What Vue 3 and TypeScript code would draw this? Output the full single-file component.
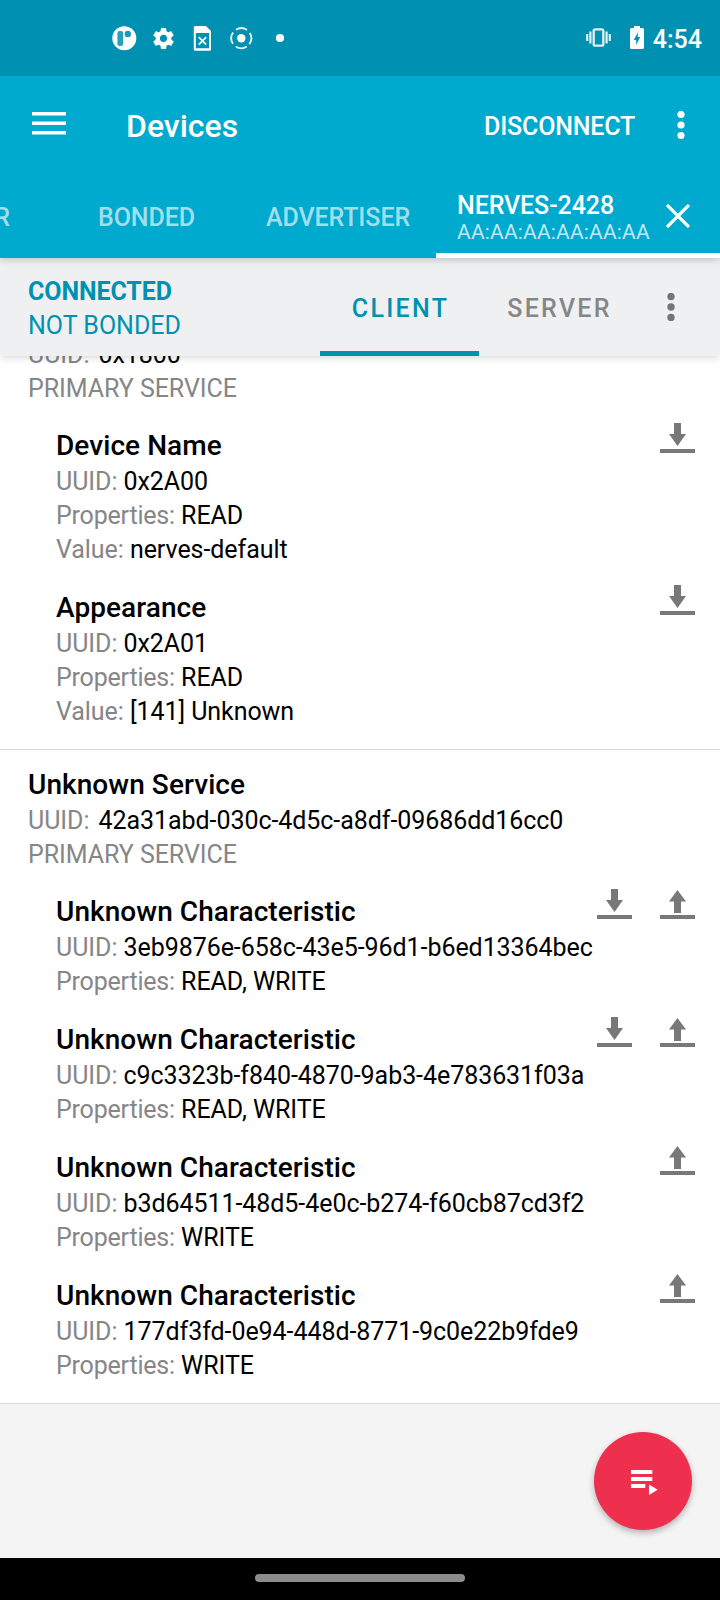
<script setup lang="ts">
type Action = 'read' | 'write'

interface Field {
  label: string
  value: string
}

interface Characteristic {
  name: string
  fields: Field[]
  actions: Action[]
}

interface Service {
  name?: string
  uuid: string
  characteristics: Characteristic[]
}

const services: Service[] = [
  {
    uuid: '0x1800',
    characteristics: [
      {
        name: 'Device Name',
        fields: [
          { label: 'UUID:', value: '0x2A00' },
          { label: 'Properties:', value: 'READ' },
          { label: 'Value:', value: 'nerves-default' },
        ],
        actions: ['read'],
      },
      {
        name: 'Appearance',
        fields: [
          { label: 'UUID:', value: '0x2A01' },
          { label: 'Properties:', value: 'READ' },
          { label: 'Value:', value: '[141] Unknown' },
        ],
        actions: ['read'],
      },
    ],
  },
  {
    name: 'Unknown Service',
    uuid: '42a31abd-030c-4d5c-a8df-09686dd16cc0',
    characteristics: [
      {
        name: 'Unknown Characteristic',
        fields: [
          { label: 'UUID:', value: '3eb9876e-658c-43e5-96d1-b6ed13364bec' },
          { label: 'Properties:', value: 'READ, WRITE' },
        ],
        actions: ['read', 'write'],
      },
      {
        name: 'Unknown Characteristic',
        fields: [
          { label: 'UUID:', value: 'c9c3323b-f840-4870-9ab3-4e783631f03a' },
          { label: 'Properties:', value: 'READ, WRITE' },
        ],
        actions: ['read', 'write'],
      },
      {
        name: 'Unknown Characteristic',
        fields: [
          { label: 'UUID:', value: 'b3d64511-48d5-4e0c-b274-f60cb87cd3f2' },
          { label: 'Properties:', value: 'WRITE' },
        ],
        actions: ['write'],
      },
      {
        name: 'Unknown Characteristic',
        fields: [
          { label: 'UUID:', value: '177df3fd-0e94-448d-8771-9c0e22b9fde9' },
          { label: 'Properties:', value: 'WRITE' },
        ],
        actions: ['write'],
      },
    ],
  },
]

const actionPaths: Record<Action, string> = {
  read: 'M14 0h7v11h5l-8.5 12L9 11h5zM0 26h35v4H0z',
  write: 'M17.5 1L26 12.6h-5V24h-7V12.6H9zM0 26h35v4H0z',
}
</script>

<template>
  <div class="screen">
    <div class="status-bar">
      <div class="notifications">
        <svg width="25" height="25" viewBox="0 0 25 25">
          <circle cx="12.3" cy="12.3" r="12" fill="#fff" />
          <rect x="5.4" y="5" width="5.8" height="15" rx="2.2" fill="#0090b2" fill-opacity=".85" />
          <circle cx="15.8" cy="8" r="3.2" fill="#0090b2" fill-opacity=".9" />
        </svg>
        <svg width="25" height="25" viewBox="0 0 24 24">
          <path fill="#fff" d="M19.43 12.98c.04-.32.07-.64.07-.98s-.03-.66-.07-.98l2.11-1.65c.19-.15.24-.42.12-.64l-2-3.46c-.12-.22-.39-.3-.61-.22l-2.49 1c-.52-.4-1.08-.73-1.69-.98l-.38-2.65C14.46 2.18 14.25 2 14 2h-4c-.25 0-.46.18-.49.42l-.38 2.65c-.61.25-1.17.59-1.69.98l-2.49-1c-.23-.09-.49 0-.61.22l-2 3.46c-.13.22-.07.49.12.64l2.11 1.65c-.04.32-.07.65-.07.98s.03.66.07.98l-2.11 1.65c-.19.15-.24.42-.12.64l2 3.46c.12.22.39.3.61.22l2.49-1c.52.4 1.08.73 1.69.98l.38 2.65c.03.24.24.42.49.42h4c.25 0 .46-.18.49-.42l.38-2.65c.61-.25 1.17-.59 1.69-.98l2.49 1c.23.09.49 0 .61-.22l2-3.46c.12-.22.07-.49-.12-.64l-2.11-1.65zM12 15.5c-1.93 0-3.5-1.57-3.5-3.5s1.57-3.5 3.5-3.5 3.5 1.57 3.5 3.5-1.57 3.5-3.5 3.5z" />
        </svg>
        <svg width="25" height="25" viewBox="0 0 25 25">
          <path fill="#fff" fill-rule="evenodd" d="M5.3 0H16l5 5v18.5a1.2 1.2 0 0 1-1.2 1.2H5a1.2 1.2 0 0 1-1.2-1.2v-22A1.5 1.5 0 0 1 5.3 0zM5.8 7v15.3h13.3V7z" />
          <path stroke="#fff" stroke-width="1.7" d="M8.8 11.2l7.4 7.4M16.2 11.2l-7.4 7.4" />
        </svg>
        <svg width="25" height="25" viewBox="0 0 25 25">
          <circle cx="12.3" cy="12.2" r="4.2" fill="#fff" />
          <circle cx="12.3" cy="12.2" r="10" fill="none" stroke="#fff" stroke-opacity=".9" stroke-width="1.9" stroke-dasharray="11.7 4.008" stroke-dashoffset="-2" transform="rotate(45 12.3 12.2)" />
        </svg>
        <svg width="25" height="25" viewBox="0 0 25 25">
          <circle cx="12" cy="12" r="4.1" fill="#fff" />
        </svg>
      </div>
      <div class="system">
        <svg class="vibrate" width="25" height="25" viewBox="0 0 25 25">
          <rect x="7.7" y="3.3" width="9.6" height="16.4" rx="1.5" fill="none" stroke="#fff" stroke-opacity=".88" stroke-width="2.3" />
          <path stroke="#fff" stroke-opacity=".88" stroke-width="2.2" d="M4.4 5.5v12M20.6 5.5v12M1.2 8v7M23.8 8v7" />
        </svg>
        <svg class="battery" width="14" height="25" viewBox="0 0 14 25">
          <path fill="#fff" d="M4 0h6v2h2.5A1.5 1.5 0 0 1 14 3.5v18a1.5 1.5 0 0 1-1.5 1.5h-11A1.5 1.5 0 0 1 0 21.5v-18A1.5 1.5 0 0 1 1.5 2H4z" />
          <path fill="#0090b2" d="M7.8 6.3v4.6h2.4l-4 8.2v-5H3.9z" />
        </svg>
        <span class="clock">4:54</span>
      </div>
    </div>

    <header class="app-header">
      <div class="toolbar">
        <svg class="menu" width="34" height="23" viewBox="0 0 34 23">
          <path fill="#fff" d="M0 0h34v3.5H0zM0 9.5h34V13H0zM0 19h34v3.5H0z" />
        </svg>
        <h1 class="title">Devices</h1>
        <span class="disconnect">DISCONNECT</span>
        <svg class="more" width="8" height="28" viewBox="0 0 8 28" fill="#fff">
          <circle cx="4" cy="3.5" r="3.6" /><circle cx="4" cy="14" r="3.6" /><circle cx="4" cy="24.5" r="3.6" />
        </svg>
      </div>
      <nav class="tabs">
        <div class="tab scanner"><span>SCANNER</span></div>
        <div class="tab bonded"><span>BONDED</span></div>
        <div class="tab advertiser"><span>ADVERTISER</span></div>
        <div class="tab device">
          <div class="device-text">
            <span class="device-name">NERVES-2428</span>
            <span class="device-address">AA:AA:AA:AA:AA:AA</span>
          </div>
          <svg class="close" width="24" height="24" viewBox="0 0 24 24">
            <path stroke="#fff" stroke-width="3.3" d="M1 1l22 22M23 1L1 23" />
          </svg>
        </div>
      </nav>
    </header>

    <div class="connection-bar">
      <div class="state">
        <span class="connected">CONNECTED</span>
        <span>NOT BONDED</span>
      </div>
      <div class="role active"><span>CLIENT</span></div>
      <div class="role server"><span>SERVER</span></div>
      <svg class="role-more" width="8" height="28" viewBox="0 0 8 28" fill="#757575">
        <circle cx="4" cy="3.5" r="3.7" /><circle cx="4" cy="14" r="3.7" /><circle cx="4" cy="24.5" r="3.7" />
      </svg>
    </div>

    <main class="content">
      <div class="scrolled">
        <section v-for="service in services" :key="service.uuid" class="service">
          <div class="service-head">
            <h2 v-if="service.name" class="name">{{ service.name }}</h2>
            <p class="line"><span class="label service-label">UUID:</span> {{ service.uuid }}</p>
            <p class="line label">PRIMARY SERVICE</p>
          </div>
          <div v-for="(item, index) in service.characteristics" :key="index" class="characteristic">
            <div class="details">
              <h3 class="name">{{ item.name }}</h3>
              <p v-for="field in item.fields" :key="field.label" class="line">
                <span class="label" :class="{ tight: field.label === 'Properties:' }">{{ field.label }}</span> {{ field.value }}
              </p>
            </div>
            <div class="actions">
              <svg v-for="action in item.actions" :key="action" width="35" height="30" viewBox="0 0 35 30">
                <path fill="#787878" :d="actionPaths[action]" />
              </svg>
            </div>
          </div>
        </section>
      </div>
      <div class="fab">
        <svg width="28" height="26" viewBox="0 0 28 26">
          <path fill="#fff" d="M0 0h21.3v4H0zM0 7h21.3v4H0zM0 14h14.3v4H0zM18 14.5l8.7 5.2L18 25z" />
        </svg>
      </div>
    </main>

    <footer class="nav-bar"><div class="handle"></div></footer>
  </div>
</template>

<style>
body {
  margin: 0;
}
</style>

<style scoped>
.screen {
  display: flex;
  flex-direction: column;
  width: 720px;
  height: 1600px;
  overflow: hidden;
  background: #f4f4f4;
  color: #000;
  font-family: Roboto, "Liberation Sans", sans-serif;
  font-size: 25px;
  line-height: 34px;
}
h1, h2, h3, p {
  margin: 0;
}
svg {
  display: block;
  flex: none;
}
span {
  white-space: nowrap;
}
.status-bar {
  display: flex;
  flex: none;
  position: relative;
  z-index: 4;
  justify-content: space-between;
  box-sizing: border-box;
  height: 76px;
  padding: 26px 18px 0 112px;
  background: #0090b2;
  color: #fff;
}
.notifications {
  display: flex;
  gap: 14px;
}
.system {
  display: flex;
}
.battery {
  margin: 0 9px 0 19px;
}
.clock {
  margin-top: -3px;
  font-weight: 500;
}
.app-header {
  flex: none;
  position: relative;
  z-index: 3;
  height: 182px;
  background: #00a9ce;
  color: #fff;
  box-shadow: 0 1px 8px rgba(0, 0, 0, 0.24);
}
.toolbar {
  display: flex;
  align-items: center;
  height: 98px;
  padding-left: 32px;
}
.menu {
  margin-bottom: 4px;
}
.title {
  flex: 1;
  padding: 2px 0 0 60px;
  font-size: 32px;
  font-weight: 500;
  line-height: 42px;
}
.disconnect {
  margin-top: 4px;
  font-weight: 500;
  letter-spacing: -0.2px;
}
.more {
  margin: 0 35px 0 42px;
}
.tabs {
  display: flex;
  height: 84px;
}
.tab {
  display: flex;
  align-items: center;
  justify-content: center;
  box-sizing: border-box;
  flex: none;
  color: rgba(255, 255, 255, 0.65);
  font-weight: 500;
  letter-spacing: -0.1px;
  padding-top: 4px;
}
.scanner {
  width: 56px;
  justify-content: flex-end;
  padding-right: 46px;
}
.bonded {
  width: 182px;
  padding-right: 1px;
}
.advertiser {
  width: 198px;
  padding-left: 2px;
}
.device {
  width: 284px;
  justify-content: flex-start;
  padding: 0 0 0 21px;
  border-bottom: 5px solid #fff;
  color: #fff;
}
.device-text {
  display: flex;
  flex-direction: column;
  width: 209px;
  padding-top: 8px;
}
.device-name {
  line-height: 28px;
}
.device-address {
  font-size: 21px;
  font-weight: 400;
  line-height: 24px;
  letter-spacing: 0.18px;
  color: rgba(255, 255, 255, 0.75);
}
.close {
  margin-top: 5px;
}
.connection-bar {
  display: flex;
  flex: none;
  position: relative;
  z-index: 2;
  height: 98px;
  background: #eff0f2;
  color: #0090b2;
  box-shadow: 0 1px 8px rgba(0, 0, 0, 0.18);
}
.state {
  display: flex;
  flex-direction: column;
  box-sizing: border-box;
  width: 320px;
  padding: 17px 0 0 28px;
}
.connected {
  font-weight: 700;
  letter-spacing: -0.1px;
}
.role {
  display: flex;
  align-items: center;
  justify-content: center;
  box-sizing: border-box;
  width: 159px;
  border-bottom: 5px solid transparent;
  font-weight: 500;
  letter-spacing: 2.3px;
}
.role span {
  padding: 9px 0 0 2px;
}
.role.active {
  border-color: #0090b2;
}
.server {
  color: #868686;
}
.role-more {
  margin: 35px 0 0 29px;
}
.content {
  position: relative;
  flex: 1;
  min-height: 0;
  overflow: hidden;
}
.scrolled {
  margin-top: -18px;
}
.service {
  padding: 0 0 20px;
  border-bottom: 1px solid #d9d9d9;
  background: #fff;
}
.service + .service {
  padding-top: 16px;
}
.service-head {
  padding-left: 28px;
  margin-bottom: 21px;
}
.service-label {
  margin-right: 3px;
}
.name {
  font-size: 28px;
  font-weight: 500;
  line-height: 38px;
  letter-spacing: 0.07px;
}
.line {
  letter-spacing: -0.06px;
}
.label {
  color: #868686;
}
.tight {
  letter-spacing: -0.2px;
}
.characteristic {
  display: flex;
  justify-content: space-between;
  padding: 0 25px 0 56px;
}
.characteristic + .characteristic {
  margin-top: 22px;
}
.details {
  width: 0;
  white-space: nowrap;
}
.actions {
  display: flex;
  gap: 28px;
  margin-top: -4px;
}
.fab {
  position: absolute;
  right: 28px;
  bottom: 28px;
  display: flex;
  box-sizing: border-box;
  width: 98px;
  height: 98px;
  padding: 38px 0 0 37px;
  border-radius: 50%;
  background: #ee2f4e;
  box-shadow: 0 3px 6px rgba(0, 0, 0, 0.28);
}
.nav-bar {
  display: flex;
  flex: none;
  justify-content: center;
  box-sizing: border-box;
  height: 42px;
  padding-top: 16px;
  background: #000;
}
.handle {
  width: 210px;
  height: 8px;
  border-radius: 4px;
  background: #8c8c8c;
}
</style>
